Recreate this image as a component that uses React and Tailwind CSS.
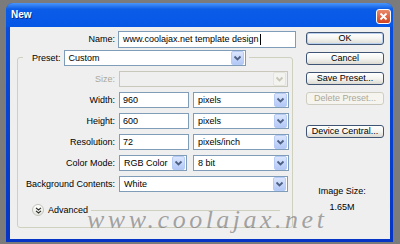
import React from "react";

function Arrow({ disabled }) {
  return (
    <div
      className={`mr-[1px] flex h-[14px] w-[13px] shrink-0 items-center justify-center rounded-[2px] border ${
        disabled
          ? "border-[#e4e3dc] bg-[#f3f3ef]"
          : "border-[#b6cbf6] bg-gradient-to-b from-[#dbe6fd] to-[#b3c8f6]"
      }`}
    >
      <svg width="9" height="6" viewBox="0 0 9 6">
        <path
          d="M1.5 1.5 L4.5 4.5 L7.5 1.5"
          fill="none"
          stroke={disabled ? "#c9c7ba" : "#4d6185"}
          strokeWidth="1.8"
        />
      </svg>
    </div>
  );
}

function Select({ value, className = "", disabled }) {
  return (
    <div
      className={`flex h-[16px] shrink-0 items-center border ${
        disabled ? "border-[#c9c7ba] bg-[#efefef]" : "border-[#7f9db9] bg-white"
      } ${className}`}
    >
      <div className="flex-1 truncate pl-[4px] text-[9px] leading-none text-black">{value}</div>
      <Arrow disabled={disabled} />
    </div>
  );
}

function Input({ value, className = "" }) {
  return (
    <div
      className={`flex h-[16px] shrink-0 items-center border border-[#7f9db9] bg-white pl-[3px] text-[9px] leading-none text-black ${className}`}
    >
      {value}
    </div>
  );
}

function Btn({ children, disabled, primary, className = "" }) {
  return (
    <div
      className={`flex h-[13px] w-[78px] items-center justify-center rounded-[3px] border text-[9px] leading-none ${
        disabled
          ? "border-[#cfcdc2] bg-[#f5f4ef] text-[#aca899]"
          : "border-[#3f5573] bg-gradient-to-b from-white via-[#f4f4f1] to-[#dcdad2] text-black"
      } ${primary ? "shadow-[inset_0_0_0_1px_#b9d0f1]" : ""} ${className}`}
    >
      {children}
    </div>
  );
}

function Row({ label, children, disabled }) {
  return (
    <div className="flex h-[16px] items-center">
      <div
        className={`w-[97px] shrink-0 text-right text-[9px] leading-none ${
          disabled ? "text-[#aca899]" : "text-black"
        }`}
      >
        {label}
      </div>
      <div className="ml-[4px] flex items-center gap-[4px]">{children}</div>
    </div>
  );
}

export default function App() {
  return (
    <div className="relative h-[244px] w-[400px] overflow-hidden bg-[#7b7b7b] pl-[6px] pt-[3px] [font-family:'Liberation_Sans',Arial,sans-serif]">
      <div className="flex h-[239px] w-[387px] flex-col overflow-hidden rounded-t-[7px] bg-gradient-to-b from-[#0a4fe0] to-[#0634c4]">
        {/* title bar */}
        <div className="flex h-[24px] shrink-0 items-center justify-between bg-gradient-to-b from-[#4a95f7] via-[#0b5de8] via-25% to-[#0656e6] pl-[5px] pr-[2px]">
          <div className="text-[10px] font-bold leading-none text-white [text-shadow:1px_1px_0_#0a2a8a]">New</div>
          <div className="mt-[2px] flex h-[15px] w-[15px] items-center justify-center rounded-[3px] border border-white bg-gradient-to-b from-[#e9896b] to-[#d1401c]">
            <svg width="9" height="9" viewBox="0 0 9 9">
              <path d="M1.5 1.5 L7.5 7.5 M7.5 1.5 L1.5 7.5" stroke="white" strokeWidth="1.8" />
            </svg>
          </div>
        </div>
        {/* body */}
        <div className="mb-[3px] ml-[4px] mr-[3px] flex flex-1 bg-[#efefef]">
          {/* left column */}
          <div className="w-[286px] shrink-0">
            <div className="mt-[4px] flex h-[17px] items-center">
              <div className="w-[105px] text-right text-[9px] leading-none text-black">Name:</div>
              <div className="ml-[3px] flex h-[17px] w-[178px] items-center border border-[#7f9db9] bg-white pl-[4px] text-[9px] leading-none text-black">
                www.coolajax.net template design
                <span className="ml-[1px] inline-block h-[11px] w-[1px] bg-black" />
              </div>
            </div>
            {/* group box */}
            <div className="ml-[7px] mt-[9px] h-[171px] w-[276px] rounded-[3px] border border-[#d0d0bf]">
              <div className="-mt-[8px] flex flex-col gap-[5px]">
                <div className="ml-[5px] flex h-[16px] w-[226px] items-center bg-[#efefef] pl-[9px]">
                  <div className="text-[9px] leading-none text-black">Preset:</div>
                  <Select value="Custom" className="ml-[3px] w-[182px]" />
                </div>
                <Row label="Size:" disabled>
                  <Select value="" disabled className="w-[169px]" />
                </Row>
                <Row label="Width:">
                  <Input value="960" className="w-[70px]" />
                  <Select value="pixels" className="w-[96px]" />
                </Row>
                <Row label="Height:">
                  <Input value="600" className="w-[70px]" />
                  <Select value="pixels" className="w-[96px]" />
                </Row>
                <Row label="Resolution:">
                  <Input value="72" className="w-[70px]" />
                  <Select value="pixels/inch" className="w-[96px]" />
                </Row>
                <Row label="Color Mode:">
                  <Select value="RGB Color" className="mr-[2px] w-[68px]" />
                  <Select value="8 bit" className="w-[96px]" />
                </Row>
                <Row label="Background Contents:">
                  <Select value="White" className="w-[169px]" />
                </Row>
              </div>
              <div className="mt-[12px] flex h-[12px] items-center">
                <div className="ml-[14px] flex h-[12px] w-[12px] items-center justify-center rounded-full border border-[#c3c3bb] bg-gradient-to-b from-white to-[#e6e6e0]">
                  <svg width="7" height="7" viewBox="0 0 7 7">
                    <path d="M1 0.8 L3.5 3 L6 0.8 M1 3.8 L3.5 6 L6 3.8" fill="none" stroke="#2b2b2b" strokeWidth="1.1" />
                  </svg>
                </div>
                <div className="ml-[4px] text-[9px] leading-none text-black">Advanced</div>
                <div className="ml-[3px] mr-[12px] h-[1px] flex-1 bg-[#d0d0bf]" />
              </div>
            </div>
          </div>
          {/* right column */}
          <div className="ml-[10px] flex flex-col">
            <div className="mt-[5px] flex flex-col gap-[7px]">
              <Btn primary>OK</Btn>
              <Btn>Cancel</Btn>
              <Btn>Save Preset...</Btn>
              <Btn disabled>Delete Preset...</Btn>
            </div>
            <Btn className="mt-[20px]">Device Central...</Btn>
            <div className="mt-[48px] w-[72px] text-center text-[9px] leading-[11px] text-black">Image Size:</div>
            <div className="mt-[5px] w-[72px] text-center text-[9px] leading-[11px] text-black">1.65M</div>
          </div>
        </div>
      </div>
      {/* watermark */}
      <div className="pointer-events-none absolute left-[87px] top-[207px] whitespace-nowrap text-[26px] italic leading-[26px] tracking-[3.5px] text-[#5e5e5e]/[0.55] [font-family:'Liberation_Serif','Times_New_Roman',serif]">
        www.coolajax.net
      </div>
    </div>
  );
}
